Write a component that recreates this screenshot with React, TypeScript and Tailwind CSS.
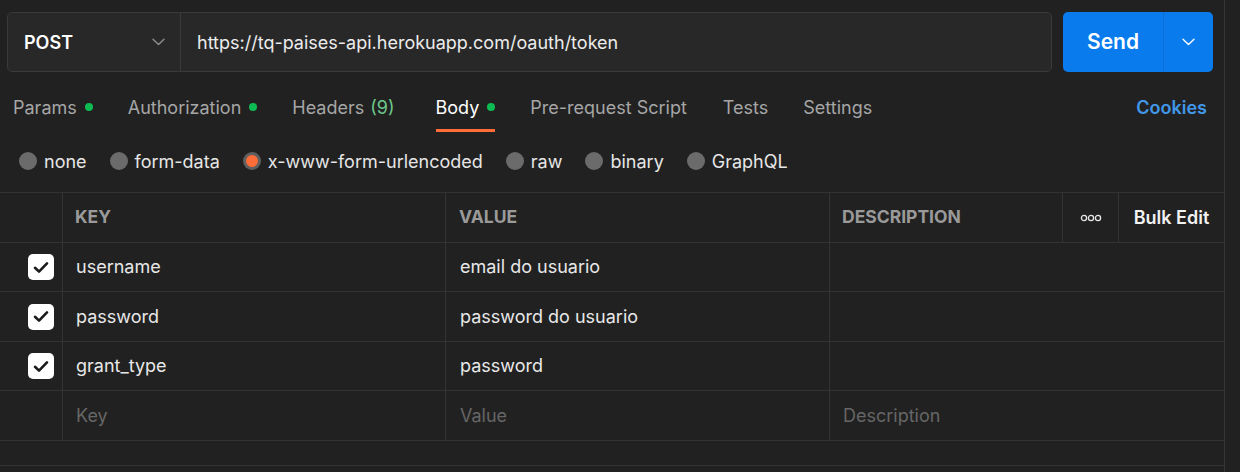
import React from "react";

const F = { fontFamily: "Inter, 'Noto Sans', sans-serif" };

function Chevron({ color, w = 13 }: { color: string; w?: number }) {
  return (
    <svg width={w} height={8} viewBox="0 0 13 8" fill="none">
      <path d="M1 1.2L6.5 6.5L12 1.2" stroke={color} strokeWidth="1.4" strokeLinecap="round" strokeLinejoin="round" />
    </svg>
  );
}

function Dot() {
  return <span className="inline-block w-[8px] h-[8px] rounded-full bg-[#0cbb52] ml-[8px]" />;
}

function Radio({ label, on }: { label: string; on?: boolean }) {
  return (
    <div className="flex items-center gap-[7px]">
      {on ? (
        <span className="w-[18px] h-[18px] rounded-full bg-[#5f5f5f] flex items-center justify-center">
          <span className="w-[12px] h-[12px] rounded-full bg-[#ff6c37]" />
        </span>
      ) : (
        <span className="w-[18px] h-[18px] rounded-full bg-[#6b6b6b]" />
      )}
      <span className="text-[18px] text-[#e6e6e6]">{label}</span>
    </div>
  );
}

function Check() {
  return (
    <span className="w-[26px] h-[26px] rounded-[5px] bg-white flex items-center justify-center">
      <svg width="16" height="13" viewBox="0 0 16 13" fill="none">
        <path d="M2 6.8L6 10.6L14 2.4" stroke="#1a1a1a" strokeWidth="2.6" strokeLinecap="round" strokeLinejoin="round" />
      </svg>
    </span>
  );
}

function Row({ k, v, h, placeholder }: { k: string; v: string; h: string; placeholder?: boolean }) {
  const tc = placeholder ? "text-[#666666]" : "text-[#e8e8e8]";
  return (
    <div className={`flex border-b border-[#333333] ${h}`}>
      <div className="w-[63px] border-r border-[#333333] flex items-center justify-end pr-[8px]">
        {!placeholder && <Check />}
      </div>
      <div className={`w-[383px] border-r border-[#333333] flex items-center pl-[13px] pb-[1px] text-[18px] ${tc}`}>{k}</div>
      <div className={`w-[384px] border-r border-[#333333] flex items-center pl-[14px] pb-[1px] text-[18px] ${tc}`}>{v}</div>
      <div className={`flex-1 flex items-center pl-[13px] pb-[1px] text-[18px] ${tc}`}>{placeholder ? "Description" : ""}</div>
    </div>
  );
}

export default function App() {
  return (
    <div style={F} className="w-[1240px] h-[472px] bg-[#212121] flex overflow-hidden">
      <div className="w-[1225px] border-r border-[#363636] flex flex-col">
        {/* request bar */}
        <div className="flex pt-[12px] pl-[7px]">
          <div className="w-[1045px] h-[60px] rounded-[5px] border border-[#3a3a3a] bg-[#282828] flex">
            <div className="w-[173px] border-r border-[#3a3a3a] flex items-center justify-between pl-[16px] pr-[15px]">
              <span className="text-[18px] font-semibold text-white">POST</span>
              <Chevron color="#8f8f8f" />
            </div>
            <div className="flex items-center pl-[16px] text-[18px] text-[#ececec]">
              https://tq-paises-api.herokuapp.com/oauth/token
            </div>
          </div>
          <div className="ml-[11px] w-[150px] h-[60px] rounded-[5px] bg-[#097bed] flex">
            <div className="w-[101px] border-r border-[#0a6ed2] flex items-center justify-center text-[21px] font-semibold text-white">
              Send
            </div>
            <div className="flex-1 flex items-center justify-center">
              <Chevron color="#ffffff" />
            </div>
          </div>
        </div>

        {/* tabs */}
        <div className="h-[60px] flex items-end pl-[13px] pr-[17px] text-[18px]">
          <div className="h-[47px] flex items-center border-b-[3px] border-transparent text-[#a6a6a6]">
            Params<Dot />
          </div>
          <div className="ml-[35px] h-[47px] flex items-center border-b-[3px] border-transparent text-[#a6a6a6]">
            Authorization<Dot />
          </div>
          <div className="ml-[35px] h-[47px] flex items-center border-b-[3px] border-transparent text-[#a6a6a6]">
            Headers<span className="ml-[6px] text-[#6cc88a]">(9)</span>
          </div>
          <div className="ml-[41px] h-[47px] flex items-center border-b-[3px] border-[#ff6c37] text-white">
            Body<Dot />
          </div>
          <div className="ml-[35px] h-[47px] flex items-center border-b-[3px] border-transparent text-[#a6a6a6]">
            Pre-request Script
          </div>
          <div className="ml-[36px] h-[47px] flex items-center border-b-[3px] border-transparent text-[#a6a6a6]">
            Tests
          </div>
          <div className="ml-[35px] h-[47px] flex items-center border-b-[3px] border-transparent text-[#a6a6a6]">
            Settings
          </div>
          <div className="ml-auto h-[47px] flex items-center border-b-[3px] border-transparent text-[#4197e8] font-semibold">
            Cookies
          </div>
        </div>

        {/* radios */}
        <div className="h-[60px] pb-[2px] flex items-center pl-[19px] gap-[23px]">
          <Radio label="none" />
          <Radio label="form-data" />
          <Radio label="x-www-form-urlencoded" on />
          <Radio label="raw" />
          <Radio label="binary" />
          <Radio label="GraphQL" />
        </div>

        {/* table */}
        <div className="border-t border-[#333333]">
          <div className="flex h-[50px] border-b border-[#333333] text-[17.5px] font-bold text-[#9a9a9a]">
            <div className="w-[63px] border-r border-[#333333]" />
            <div className="w-[383px] border-r border-[#333333] flex items-center pl-[12px]">KEY</div>
            <div className="w-[384px] border-r border-[#333333] flex items-center pl-[13px]">VALUE</div>
            <div className="w-[233px] border-r border-[#333333] flex items-center pl-[12px]">DESCRIPTION</div>
            <div className="w-[56px] border-r border-[#333333] flex items-center justify-center">
              <svg width="22" height="8" viewBox="0 0 22 8" fill="none">
                <circle cx="4" cy="4" r="2.6" stroke="#e6e6e6" strokeWidth="1.3" />
                <circle cx="11" cy="4" r="2.6" stroke="#e6e6e6" strokeWidth="1.3" />
                <circle cx="18" cy="4" r="2.6" stroke="#e6e6e6" strokeWidth="1.3" />
              </svg>
            </div>
            <div className="flex-1 flex items-center justify-center text-[18px] font-semibold text-[#f2f2f2]">Bulk Edit</div>
          </div>
          <Row k="username" v="email do usuario" h="h-[49px]" />
          <Row k="password" v="password do usuario" h="h-[50px]" />
          <Row k="grant_type" v="password" h="h-[49px]" />
          <Row k="Key" v="Value" h="h-[50px]" placeholder />
          <div className="h-[25px] border-b border-[#333333]" />
        </div>
      </div>
    </div>
  );
}
